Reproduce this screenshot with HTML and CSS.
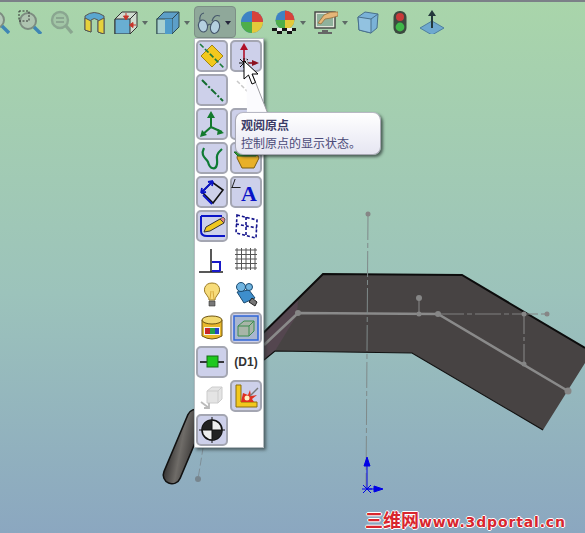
FILE: index.html
```html
<!DOCTYPE html>
<html lang="zh-CN">
<head>
  <meta charset="UTF-8">
  <title>观阅原点</title>
  <link rel="stylesheet" href="styles.css">
</head>
<body>

<!-- 3D SCENE -->
<svg class="scene" viewBox="0 0 585 533">
  <defs>
    <linearGradient id="pipeFill" x1="0" y1="0" x2="1" y2="0.45">
      <stop offset="0" stop-color="#2e2c2c"/>
      <stop offset="0.5" stop-color="#6f6c68"/>
      <stop offset="1" stop-color="#3c3a39"/>
    </linearGradient>
  </defs>
  <path d="M196 418 L172 475" stroke="#111" stroke-width="19" stroke-linecap="round" fill="none"/>
  <path d="M196 418 L172 475" stroke="url(#pipeFill)" stroke-width="16" stroke-linecap="round" fill="none"/>
  <polygon points="230,365 323,274 462,275 585,348 585,363 543,430 412,353 275,351 250,372" fill="#474343"/>
  <polygon points="264,332 298,300 297,315 275,351 264,360" fill="#54464f"/>
  <polyline points="240,356 323,274 462,275 585,348" fill="none" stroke="#0c0c0c" stroke-width="2"/>
  <polyline points="264,360 275,351 412,353 543,430" fill="none" stroke="#111" stroke-width="1.200"/>
  <polyline points="264,345 298,313 438,314 568,391" fill="none" stroke="#8a8a8a" stroke-width="2.600"/>
  <line x1="438" y1="314" x2="547" y2="314" stroke="#808080" stroke-dasharray="26 3 5 3"/>
  <line x1="419" y1="298" x2="419" y2="314" stroke="#8a8a8a"/>
  <line x1="524" y1="314" x2="524" y2="364" stroke="#8a8a8a" stroke-dasharray="20 3 4 3"/>
  <line x1="368" y1="214" x2="366" y2="488" stroke="#7f8a8a" stroke-dasharray="26 3 5 3"/>
  <line x1="205" y1="436" x2="198" y2="479" stroke="#7f8f98" stroke-dasharray="8 3"/>
  <g fill="#868686">
    <circle cx="298" cy="313" r="3"/>
    <circle cx="419" cy="298" r="3"/>
    <circle cx="419" cy="314" r="2.500"/>
    <circle cx="438" cy="314" r="3"/>
    <circle cx="524" cy="314" r="2.500"/>
    <circle cx="524" cy="364" r="2.500"/>
    <circle cx="547" cy="314" r="2.500"/>
    <circle cx="568" cy="391" r="3.500"/>
    <circle cx="368" cy="214" r="2.500"/>
    <circle cx="198" cy="479" r="3" fill="#77858e"/>
  </g>
  <!-- sketch origin -->
  <g stroke="#0000e6" fill="#0000e6">
    <line x1="367" y1="489" x2="367" y2="466"/>
    <line x1="367" y1="489" x2="375" y2="489"/>
    <path d="M367 457 L370 466 H364 Z"/>
    <path d="M383 489 L374 486 V492 Z"/>
    <path d="M363 485 L371 493 M371 485 L363 493 M362 489 H372" fill="none"/>
  </g>
</svg>

<!-- TOOLBAR -->
<div class="toolbar">
  <div class="tool">
    <svg class="ico" viewBox="0 0 24 24"><circle cx="10" cy="10" r="8" fill="#b4c8b8" stroke="#7d8c80" stroke-width="2"/><path d="M16 16 L23 23" stroke="#3f86b4" stroke-width="3.400"/></svg>
  </div>
  <div class="tool">
    <svg class="ico" viewBox="0 0 24 24"><circle cx="10" cy="11" r="8" fill="#aec4b0" stroke="#7d8c80" stroke-width="2"/><rect x="1" y="1" width="10" height="10" fill="none" stroke="#333" stroke-dasharray="2 1.500"/><path d="M16 17 L23 24" stroke="#3f86b4" stroke-width="3.400"/></svg>
  </div>
  <div class="tool">
    <svg class="ico" viewBox="0 0 24 24"><circle cx="10" cy="10" r="8" fill="#a2c6a6" stroke="#8aa690" stroke-width="2.400"/><path d="M6 8 H14 M6 12 H14" stroke="#8aa690" stroke-width="2"/><path d="M16 16 L22 23" stroke="#8aa690" stroke-width="3.400"/></svg>
  </div>
  <div class="tool">
    <svg class="ico" viewBox="0 0 24 24"><path d="M3 6 Q12 -1 22 6 L22 24 L16 22 L16 10 Q12 7 9 10 L9 22 L3 20 Z" fill="#5aa6d0" stroke="#555"/><path d="M3 8 L9 11 V22 L3 20 Z M16 11 L22 8 V24 L16 22 Z" fill="#e6d23c" stroke="#555"/></svg>
  </div>
  <div class="tool">
    <svg class="ico" viewBox="0 0 24 24"><path d="M1 9 L8 2 H23 V17 L16 24 H1 Z" fill="#d0dccf" stroke="#333"/><path d="M1 9 H16 V24 H1 Z" fill="#69aed2" stroke="#333"/><path d="M16 9 L23 2" stroke="#333"/><path d="M12 3 V8 M9.500 6 L12 10 L14.500 6 Z M22 15 H17 M19 12.500 L15.500 15 L19 17.500 Z" fill="#c8352a" stroke="#c8352a"/></svg>
    <span class="caret"></span>
  </div>
  <div class="tool">
    <svg class="ico" viewBox="0 0 24 24"><path d="M1 9 L8 2 H23 V17 L16 24 H1 Z" fill="#5d9fc8" stroke="#2f4a50"/><rect x="1" y="9" width="15" height="15" fill="#a8d0cf" stroke="#2f4a50"/><rect x="9" y="9" width="7" height="15" fill="#4f9ccb"/><path d="M16 9 L23 2" stroke="#2f4a50"/></svg>
    <span class="caret"></span>
  </div>
  <div class="tool tool-open">
    <svg class="ico" viewBox="0 0 24 24"><ellipse cx="6" cy="16" rx="4.500" ry="6" transform="rotate(-12 6 16)" fill="#b4d0e0" stroke="#46586c" stroke-width="1.100"/><ellipse cx="18" cy="17" rx="4.500" ry="6.500" transform="rotate(12 18 17)" fill="#b4d0e0" stroke="#46586c" stroke-width="1.100"/><path d="M3 11 Q2 4 7 3 M15 11 Q17 4 23 6 M10.500 16 Q12 13 14 15" fill="none" stroke="#46586c" stroke-width="1.100"/></svg>
    <span class="caret caret-dark"></span>
  </div>
  <div class="tool">
    <svg class="ico" viewBox="0 0 24 24"><circle cx="12" cy="12" r="11" fill="#3d83c4"/><path d="M12 1 A11 11 0 0 1 23 12 H12 Z" fill="#d8433a"/><path d="M1 12 A11 11 0 0 0 12 23 V12 Z" fill="#4fae4a"/><path d="M23 12 A11 11 0 0 1 12 23 V12 Z" fill="#e4c93a"/></svg>
  </div>
  <div class="tool">
    <svg class="ico" viewBox="0 0 24 24"><circle cx="13" cy="10" r="9.500" fill="#3d83c4"/><path d="M13 .5 A9.500 9.500 0 0 1 22.500 10 H13 Z" fill="#d8433a"/><path d="M3.500 10 A9.500 9.500 0 0 0 13 19.500 V10 Z" fill="#4fae4a"/><path d="M22.500 10 A9.500 9.500 0 0 1 13 19.500 V10 Z" fill="#e4c93a"/><path d="M0 18 H5 V21 H0 Z M10 18 H15 V21 H10 Z M20 18 H24 V21 H20 Z M5 21 H10 V25 H5 Z M15 21 H20 V25 H15 Z" fill="#161616"/><path d="M5 18 H10 V21 H5 Z M15 18 H20 V21 H15 Z" fill="#eee"/></svg>
    <span class="caret"></span>
  </div>
  <div class="tool">
    <svg class="ico" viewBox="0 0 24 24"><rect x="1" y="2" width="20" height="16" fill="#dfe4d8" stroke="#444" stroke-width="1.400"/><rect x="3" y="4" width="16" height="12" fill="#8fb19c"/><path d="M8 20 H14 V22 H18 V24 H4 V22 H8 Z" fill="#666"/><path d="M4 13 L10 5 Q16 1 24 2 L24 6 L17 8 L11 9 L7 14 Z" fill="#e5b678" stroke="#96703c" stroke-width=".8"/></svg>
    <span class="caret"></span>
  </div>
  <div class="tool">
    <svg class="ico" viewBox="0 0 24 24"><path d="M2 7 L9 2 L22 4 L21 18 L15 23 L3 20 Z" fill="#7ab2d8" stroke="#49708c"/><path d="M2 7 L15 9 L15 23 L3 20 Z" fill="#92c2e0" stroke="#49708c"/><path d="M15 9 L22 4" stroke="#49708c"/></svg>
  </div>
  <div class="tool">
    <svg class="ico" viewBox="0 0 24 24"><rect x="5.500" y="1" width="13" height="23" rx="6" fill="#3c4a40"/><circle cx="12" cy="7" r="4" fill="#c83a3a"/><circle cx="12" cy="17" r="4.400" fill="#3fb84a"/></svg>
  </div>
  <div class="tool">
    <svg class="ico" viewBox="0 0 24 24"><path d="M0 18 L12 11 L24 18 L12 25 Z" fill="#6fa9cf" stroke="#4f7f9e"/><path d="M12 18 V4" stroke="#24383c" stroke-width="2"/><path d="M12 0 L16 6 H8 Z" fill="#24383c"/></svg>
  </div>
</div>

<!-- FLY-OUT MENU -->
<div class="menu">
  <div class="btn on"><svg viewBox="0 0 28 28"><path d="M14 3 L25 14 L14 25 L3 14 Z" fill="#f2c81e" stroke="#a08414"/><path d="M2 2 L26 26" stroke="#1d7a3c" stroke-width="1.600" stroke-dasharray="5 2"/></svg></div>
  <div class="btn on"><svg viewBox="0 0 28 28"><path d="M12 22 V6" stroke="#b01028" stroke-width="1.600"/><path d="M12 1 L16 8 H8 Z" fill="#b01028"/><path d="M12 21 H22" stroke="#8c1020" stroke-width="1.600"/><path d="M27 21 L20 18 V24 Z" fill="#8c1020"/><path d="M8 17 L16 25 M16 17 L8 25 M7 21 H17 M12 16 V26" stroke="#111" stroke-width="1"/></svg></div>
  <div class="btn on"><svg viewBox="0 0 28 28"><path d="M4 4 L25 25" stroke="#146c30" stroke-width="2" stroke-dasharray="7 2 2 2"/></svg></div>
  <div class="btn"><svg viewBox="0 0 28 28"><path d="M5 5 L26 26" stroke="#c8c8c8" stroke-width="1.500" stroke-dasharray="4 2"/></svg></div>
  <div class="btn on"><svg viewBox="0 0 28 28"><path d="M13 5 V17 L4 25 M13 17 L24 22" fill="none" stroke="#137a2e" stroke-width="2"/><path d="M13 1 L17 8 H9 Z M2 27 L4 20 L9 25 Z M26 23 L19 25 L20 19 Z" fill="#137a2e"/></svg></div>
  <div class="btn on"></div>
  <div class="btn on"><svg viewBox="0 0 28 28"><path d="M6 4 C2 12 8 14 10 18 C12 26 18 26 19 20 C20 14 16 12 24 5" fill="none" stroke="#0e7a34" stroke-width="2.200"/></svg></div>
  <div class="btn on"><svg viewBox="0 0 28 28"><path d="M6 8 H24 L27 14 L22 24 H10 L5 14 Z" fill="#e8b028" stroke="#7a5c10"/><path d="M2 8 H26 L24 12 H6 Z" fill="#3aa83a" stroke="#1b6a24"/></svg></div>
  <div class="btn on"><svg viewBox="0 0 28 28"><path d="M4 14 L14 4 L25 12 L15 25 Z" fill="none" stroke="#111" stroke-width="1.600"/><path d="M3 15 L15 3 M15 3 L10 4 M15 3 L14 8 M3 15 L4 10 M3 15 L8 14 M5 17 L14 26" fill="none" stroke="#0a14c8" stroke-width="1.800"/></svg></div>
  <div class="btn on btn-a"><span class="root"></span><span class="glyph-a">A</span></div>
  <div class="btn on"><svg viewBox="0 0 28 28"><path d="M3 4 V19 Q3 24 9 24 H27" fill="none" stroke="#0a14c8" stroke-width="2"/><path d="M3 4 H24" stroke="#0a14c8" stroke-width="2"/><path d="M6 20 L8 15 L22 7 L26 11 L12 19 Z" fill="#f0c81e" stroke="#333"/><path d="M22 7 L26 11 L27 7 L25 5 Z" fill="#e08888" stroke="#333" stroke-width=".7"/></svg></div>
  <div class="btn"><svg viewBox="0 0 28 28"><path d="M5 3 L25 8 L24 26 L4 21 Z M4 12 L25 16 M14 5 L14 23" fill="none" stroke="#14148c" stroke-width="1.600" stroke-dasharray="3 2"/></svg></div>
  <div class="btn"><svg viewBox="0 0 28 28"><path d="M1 26 H25 M13 3 V26" stroke="#222" stroke-width="1.500"/><path d="M14 16 H22 V25 M14 25 H22" fill="none" stroke="#1a1ac8" stroke-width="2"/></svg></div>
  <div class="btn"><svg viewBox="0 0 28 28"><path d="M3 4 H25 M3 8.500 H25 M3 13 H25 M3 17.500 H25 M3 22 H25 M5 2 V24 M9.500 2 V24 M14 2 V24 M18.500 2 V24 M23 2 V24" stroke="#555" stroke-width="1"/></svg></div>
  <div class="btn"><svg viewBox="0 0 28 28"><path d="M14 3 C6 3 5 11 8 14 C10 17 11 18 11 20 H17 C17 18 18 17 20 14 C23 11 22 3 14 3 Z" fill="#f7dc7a" stroke="#9a7a24"/><path d="M11 21 H17 V26 H11 Z" fill="#777" stroke="#333" stroke-width=".6"/><path d="M12 19 L13 11 M16 19 L15 11" stroke="#c89020" stroke-width=".7"/></svg></div>
  <div class="btn"><svg viewBox="0 0 28 28"><path d="M5 12 L17 10 L23 18 L12 23 Z" fill="#3e8ecc" stroke="#1a4a70"/><circle cx="9" cy="7" r="4.500" fill="#6fb4e0" stroke="#1a4a70"/><circle cx="17" cy="7" r="3.500" fill="#6fb4e0" stroke="#1a4a70"/><path d="M20 18 L25 22 L23 26 L17 22 Z" fill="#777" stroke="#222"/></svg></div>
  <div class="btn"><svg viewBox="0 0 28 28"><path d="M4 6 V22 Q14 28 24 22 V6 Z" fill="#e8b82c" stroke="#6e5410"/><ellipse cx="14" cy="6" rx="10" ry="4" fill="#f2d970" stroke="#6e5410"/><rect x="6" y="13" width="16" height="8" fill="#f2f2f2"/><path d="M7 14 H12 V20 H7 Z" fill="#c82828"/><path d="M12 14 H17 V20 H12 Z" fill="#22a048"/><path d="M17 14 H21 V20 H17 Z" fill="#2440c8"/></svg></div>
  <div class="btn on"><svg viewBox="0 0 28 28"><rect x="2" y="2" width="24" height="24" fill="#a9b6cf" stroke="#2f66d8" stroke-width="1.500"/><path d="M6 12 L12 7 H22 V17 L17 22 H6 Z" fill="#a8b5a8" stroke="#3c8c50"/><path d="M6 12 H17 V22 M17 12 L22 7" fill="none" stroke="#3c8c50"/></svg></div>
  <div class="btn on"><svg viewBox="0 0 28 28"><path d="M2 14 H26" stroke="#111" stroke-width="1.600"/><rect x="9" y="8" width="11" height="11" fill="#1ec81e" stroke="#156a15"/></svg></div>
  <div class="btn btn-label">(D1)</div>
  <div class="btn"><svg viewBox="0 0 28 28"><path d="M9 9 L14 5 H24 V17 L20 21 H9 Z" fill="#e4e4e4" stroke="#ccc"/><path d="M9 9 H20 V21 M20 9 L24 5" fill="none" stroke="#ccc"/><path d="M3 20 L11 26 M11 21 V26 H6" fill="none" stroke="#bbb" stroke-width="1.800"/></svg></div>
  <div class="btn on"><svg viewBox="0 0 28 28"><path d="M4 3 H9 V20 H25 V25 H4 Z" fill="#f2c81e" stroke="#8a6e10"/><path d="M9 20 L11 11 L16 13 L18 8 L19 14 L25 13 L20 17 L22 20 Z" fill="#e03020"/><path d="M18 14 L26 6" stroke="#777" stroke-width="1.400"/><circle cx="15" cy="16" r="2.500" fill="#fff2c0"/></svg></div>
  <div class="btn on"><svg viewBox="0 0 28 28"><circle cx="14" cy="14" r="10" fill="#eee" stroke="#111" stroke-width="1.600"/><path d="M14 14 V4 A10 10 0 0 0 4 14 Z M14 14 V24 A10 10 0 0 0 24 14 Z" fill="#222"/><path d="M14 1 V27 M1 14 H27" stroke="#111"/></svg></div>
  <div class="btn"></div>
</div>

<!-- TOOLTIP -->
<svg class="tip-arrow" viewBox="0 0 24 56"><path d="M2 0 L24 56 H3 Z" fill="#fbfbfe"/><path d="M2 0 L24 56" fill="none" stroke="#9a9aa0"/></svg>
<div class="tip">
  <div class="tip-title">观阅原点</div>
  <div class="tip-text">控制原点的显示状态。</div>
</div>

<!-- CURSOR -->
<svg class="cursor" viewBox="0 0 17 26"><path d="M1 1 V19 L5.500 15 L9 24 L12.500 22.500 L9 14 L15 14 Z" fill="#fff" stroke="#000"/></svg>

<div class="mark"><span class="mark-cn">三维网</span>www.3dportal.cn</div>

</body>
</html>
```
FILE: styles.css
```css
html, body {
  margin: 0;
  height: 100%;
  overflow: hidden;
}
body {
  position: relative;
  background: linear-gradient(#a9d5aa, #9cc3bb 55%, #8ba7c0);
  font-family: "Noto Sans CJK SC", "Liberation Sans", sans-serif;
}
.scene {
  position: absolute;
  left: 0;
  top: 0;
  width: 585px;
  height: 533px;
}

/* toolbar */
.toolbar {
  position: relative;
  display: flex;
  align-items: center;
  gap: 8px;
  height: 32px;
  padding-top: 4px;
  margin-left: -14px;
  border-top: 2px solid #7c8088;
}
.tool {
  display: flex;
  align-items: center;
  gap: 4px;
}
.ico {
  width: 24px;
  height: 24px;
}
.caret {
  width: 0;
  height: 0;
  border-left: 3px solid transparent;
  border-right: 3px solid transparent;
  border-top: 4px solid #5d6a66;
  margin-top: 2px;
}
.caret-dark {
  border-top-color: #26263c;
}
.tool-open {
  box-sizing: border-box;
  width: 42px;
  height: 32px;
  margin: 0 -4px;
  padding-left: 2px;
  background: #8fa89a;
  border: 1px solid #7d8f86;
  border-radius: 4px;
}

/* fly-out menu */
.menu {
  position: absolute;
  left: 194px;
  top: 38px;
  display: grid;
  grid-template-columns: 32px 32px;
  grid-auto-rows: 32px;
  gap: 2px;
  padding: 1px;
  background: #fff;
  border: 1px solid #b4bcc0;
  box-shadow: 2px 2px 3px rgba(40, 50, 50, 0.65);
}
.btn {
  box-sizing: border-box;
  display: flex;
  align-items: center;
  justify-content: center;
  border: 2px solid transparent;
  border-radius: 5px;
}
.btn svg {
  width: 28px;
  height: 28px;
}
.btn.on {
  background: #cdd0ea;
  border-color: #a4a6b2;
}
.btn-label {
  font-family: "Liberation Sans", sans-serif;
  font-size: 12px;
  font-weight: bold;
  color: #333;
  white-space: nowrap;
}
.btn-a {
  position: relative;
}
.glyph-a {
  font-family: "Liberation Serif", serif;
  font-size: 22px;
  font-weight: bold;
  line-height: 22px;
  margin: 4px 0 0 6px;
  color: #0a14c8;
}
.root {
  position: absolute;
  left: 1px;
  top: 1px;
  width: 8px;
  height: 8px;
  border-left: 1px solid #222;
  border-bottom: 1px solid #222;
  transform: skewX(-20deg);
}

/* tooltip */
.tip {
  position: absolute;
  z-index: 1;
  left: 235px;
  top: 112px;
  box-sizing: border-box;
  width: 146px;
  height: 43px;
  padding: 3px 5px;
  background: linear-gradient(#fff, #e6e6f2);
  border: 1px solid #a8a8b4;
  border-top-color: #b8b8c4;
  border-radius: 8px;
  box-shadow: 2px 2px 3px rgba(30, 40, 40, 0.65);
  color: #4a4a78;
  font-size: 12px;
  line-height: 18px;
  white-space: nowrap;
}
.tip-title {
  font-weight: bold;
  color: #3b3b66;
}
.tip-arrow {
  position: absolute;
  z-index: 1;
  left: 244px;
  top: 58px;
  width: 24px;
  height: 56px;
}
.cursor {
  position: absolute;
  z-index: 2;
  left: 243px;
  top: 60px;
  width: 17px;
  height: 26px;
}

/* watermark */
.mark {
  position: absolute;
  left: 365px;
  top: 509px;
  font-family: "DejaVu Sans", sans-serif;
  font-size: 14px;
  font-weight: bold;
  line-height: 20px;
  letter-spacing: 0.85px;
  color: #d8262e;
  white-space: nowrap;
  text-shadow: 1px 0 #fff, -1px 0 #fff, 0 1px #fff, 0 -1px #fff;
}
.mark-cn {
  font-family: "Noto Sans CJK SC", sans-serif;
  font-size: 18px;
  letter-spacing: 0;
}
```
